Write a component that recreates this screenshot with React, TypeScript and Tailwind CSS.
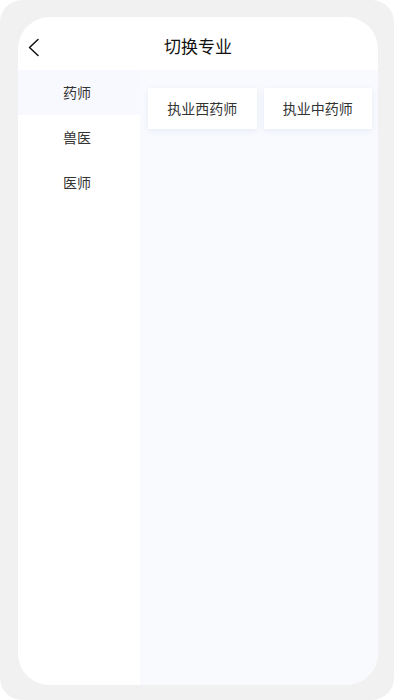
import { useState } from 'react'

const groups = [
  { name: '药师', items: ['执业西药师', '执业中药师'] },
  { name: '兽医', items: [] as string[] },
  { name: '医师', items: [] as string[] },
]

export default function App() {
  const [active, setActive] = useState(0)

  return (
    <div
      className="h-[700px] w-[394px] bg-white"
      style={{ fontFamily: '"Noto Sans CJK SC", "Noto Sans", sans-serif' }}
    >
      <div className="flex h-full w-full flex-col rounded-[22px] bg-[#f1f1f1] pl-[18px] pr-[16px] pt-[17px] pb-[15px]">
        <div className="flex flex-1 flex-col overflow-hidden rounded-[32px] bg-white">
          {/* Header */}
          <header className="relative flex h-[53px] shrink-0 items-center justify-center pt-[4px]">
            <button className="absolute left-[9px] top-[20px] p-0">
              <svg width="14" height="20" viewBox="0 0 14 20" fill="none">
                <path d="M11 2.5L2.5 10.5L11 18.5" stroke="#111" strokeWidth="1.5" strokeLinecap="round" strokeLinejoin="round" />
              </svg>
            </button>
            <span className="text-[17px] leading-none text-[#111]">切换专业</span>
          </header>

          {/* Body */}
          <div className="flex flex-1">
            <nav className="w-[122px] shrink-0 bg-white">
              {groups.map((g, i) => (
                <div
                  key={g.name}
                  onClick={() => setActive(i)}
                  className={`flex h-[45px] items-center justify-center pr-[4px] text-[14px] text-[#333] ${
                    active === i ? 'bg-[#f8f9fe]' : 'bg-white'
                  }`}
                >
                  {g.name}
                </div>
              ))}
            </nav>
            <main className="flex-1 bg-[#f9fafe] pl-[8px] pr-[6px] pt-[18px]">
              <div className="grid grid-cols-2 gap-x-[7px]">
                {groups[active].items.map((item) => (
                  <div
                    key={item}
                    className="flex h-[41px] items-center justify-center bg-white text-[14px] text-[#333] shadow-[0_2px_6px_rgba(200,210,235,0.35)]"
                  >
                    {item}
                  </div>
                ))}
              </div>
            </main>
          </div>
        </div>
      </div>
    </div>
  )
}
